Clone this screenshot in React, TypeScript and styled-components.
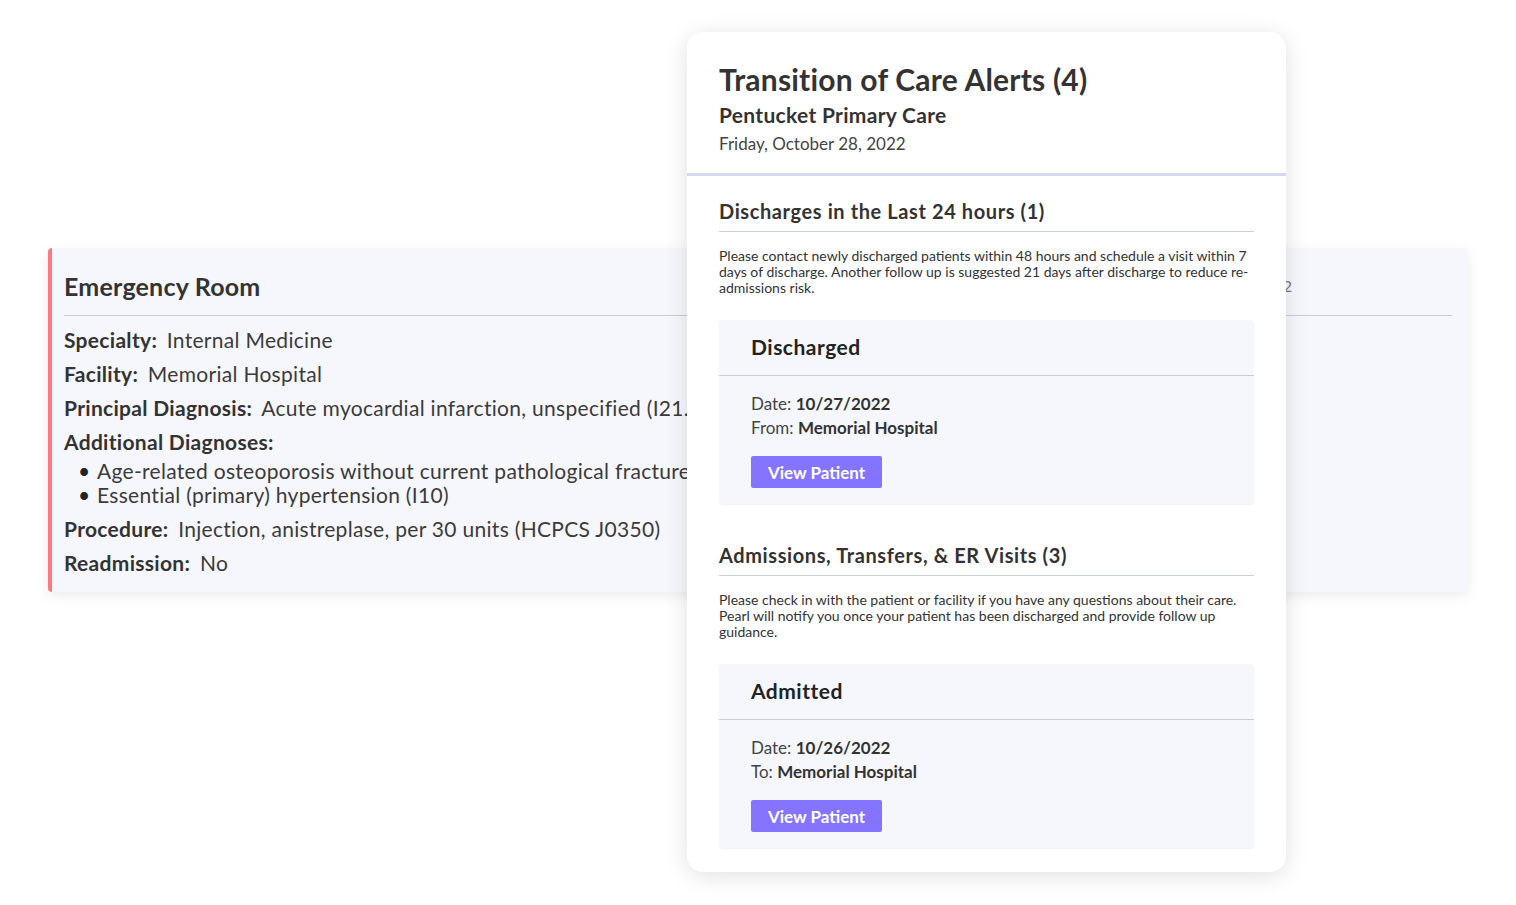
import React from "react";
import styled, { createGlobalStyle } from "styled-components";

const GlobalStyle = createGlobalStyle`
  html, body {
    margin: 0;
    padding: 0;
    background: #ffffff;
  }
  body {
    font-family: "Lato", "Noto Sans", sans-serif;
    color: #333333;
  }
`;

type Visit = {
  status: string;
  date: string;
  place: string;
  placeLabel: string;
};

const discharged: Visit[] = [
  { status: "Discharged", date: "10/27/2022", placeLabel: "From:", place: "Memorial Hospital" },
];

const admitted: Visit[] = [
  { status: "Admitted", date: "10/26/2022", placeLabel: "To:", place: "Memorial Hospital" },
];

function VisitCard({ visit }: { visit: Visit }) {
  return (
    <Card>
      <CardHead>{visit.status}</CardHead>
      <CardBody>
        <InfoLine>
          Date: <strong>{visit.date}</strong>
        </InfoLine>
        <InfoLine>
          {visit.placeLabel} <strong>{visit.place}</strong>
        </InfoLine>
        <ViewBtn>View Patient</ViewBtn>
      </CardBody>
    </Card>
  );
}

function App() {
  return (
    <Page>
      <GlobalStyle />
      <EventCard>
        <EventHeader>
          <EventTitle>Emergency Room</EventTitle>
          <EventDate>10/26/2022</EventDate>
        </EventHeader>
        <EventBody>
          <Field>
            <b>Specialty:</b> Internal Medicine
          </Field>
          <Field>
            <b>Facility:</b> Memorial Hospital
          </Field>
          <Field>
            <b>Principal Diagnosis:</b> Acute myocardial infarction, unspecified (I21.9)
          </Field>
          <Field>
            <b>Additional Diagnoses:</b>
          </Field>
          <DiagList>
            <li>Age-related osteoporosis without current pathological fracture (M81.0)</li>
            <li>Essential (primary) hypertension (I10)</li>
          </DiagList>
          <Field>
            <b>Procedure:</b> Injection, anistreplase, per 30 units (HCPCS J0350)
          </Field>
          <Field>
            <b>Readmission:</b> No
          </Field>
        </EventBody>
      </EventCard>

      <Modal>
        <ModalHeader>
          <ModalTitle>Transition of Care Alerts (4)</ModalTitle>
          <PracticeName>Pentucket Primary Care</PracticeName>
          <Today>Friday, October 28, 2022</Today>
        </ModalHeader>
        <ModalBody>
          <Section>
            <SectionTitle>Discharges in the Last 24 hours (1)</SectionTitle>
            <SectionNote>
              Please contact newly discharged patients within 48 hours and schedule a visit within 7
              days of discharge. Another follow up is suggested 21 days after discharge to reduce re-
              admissions risk.
            </SectionNote>
            {discharged.map((v) => (
              <VisitCard key={v.status} visit={v} />
            ))}
          </Section>
          <Section>
            <SectionTitle>Admissions, Transfers, &amp; ER Visits (3)</SectionTitle>
            <SectionNote>
              Please check in with the patient or facility if you have any questions about their care.
              Pearl will notify you once your patient has been discharged and provide follow up
              guidance.
            </SectionNote>
            {admitted.map((v) => (
              <VisitCard key={v.status} visit={v} />
            ))}
          </Section>
        </ModalBody>
      </Modal>
    </Page>
  );
}

const Page = styled.div`
  position: relative;
  width: 1516px;
  height: 905px;
  padding: 248px 48px 0;
  box-sizing: border-box;
  overflow: hidden;
`;

const EventCard = styled.div`
  width: 1420px;
  height: 344px;
  box-sizing: border-box;
  background: #f6f7fc;
  border-left: 4px solid #ff7a80;
  border-radius: 4px;
  padding: 0 16px 0 12px;
  box-shadow: 0 4px 14px rgba(0, 0, 0, 0.08);
  overflow: hidden;
`;

const EventHeader = styled.div`
  display: flex;
  justify-content: space-between;
  align-items: center;
  height: 67px;
  border-bottom: 1px solid #c9cbdb;
`;

const EventTitle = styled.h2`
  margin: 8px 0 0;
  font-size: 25px;
  letter-spacing: 0.2px;
  font-weight: 700;
  color: #333333;
`;

const EventDate = styled.span`
  margin: 8px 160px 0 0;
  font-size: 16px;
  color: #777777;
`;

const EventBody = styled.div`
  padding-top: 7px;
`;

const Field = styled.div`
  font-size: 21px;
  letter-spacing: 0.3px;
  line-height: 34px;
  color: #3b3b3b;
  white-space: nowrap;
  b {
    font-weight: 700;
    margin-right: 4px;
    color: #333333;
  }
`;

const DiagList = styled.ul`
  margin: 0 0 5px;
  padding-left: 14px;
  list-style: none;
  font-size: 21px;
  letter-spacing: 0.3px;
  line-height: 24px;
  color: #3b3b3b;
  white-space: nowrap;
  li::before {
    content: "•";
    display: inline-block;
    width: 19px;
    color: #222222;
  }
`;

const Modal = styled.div`
  position: absolute;
  left: 687px;
  top: 32px;
  width: 599px;
  height: 840px;
  background: #ffffff;
  border-radius: 16px;
  box-shadow: 0 4px 24px rgba(0, 0, 0, 0.12);
  overflow: hidden;
`;

const ModalHeader = styled.div`
  padding: 28px 32px 18px;
  border-bottom: 3px solid #d4d9ef;
`;

const ModalTitle = styled.h1`
  margin: 0;
  font-size: 30px;
  letter-spacing: 0.2px;
  line-height: 38px;
  font-weight: 700;
  color: #333333;
`;

const PracticeName = styled.div`
  margin-top: 4px;
  font-size: 21px;
  letter-spacing: 0.3px;
  line-height: 26px;
  font-weight: 700;
  color: #333333;
`;

const Today = styled.div`
  margin-top: 5px;
  font-size: 17px;
  line-height: 22px;
  color: #444444;
`;

const ModalBody = styled.div`
  padding: 23px 32px 0;
  display: flex;
  flex-direction: column;
  gap: 39px;
`;

const Section = styled.div``;

const SectionTitle = styled.h3`
  margin: 0;
  padding-bottom: 8px;
  font-size: 20px;
  letter-spacing: 0.6px;
  line-height: 24px;
  font-weight: 700;
  color: #333333;
  border-bottom: 1px solid #c9d0dc;
`;

const SectionNote = styled.p`
  margin: 16px 0 24px;
  font-size: 14px;
  letter-spacing: 0;
  line-height: 16px;
  color: #333333;
`;

const Card = styled.div`
  background: #f6f7fc;
  border-radius: 4px;
  box-shadow: 0 1px 2px rgba(0, 0, 0, 0.06);
`;

const CardHead = styled.div`
  padding: 13px 32px 14px;
  font-size: 21px;
  letter-spacing: 0.5px;
  line-height: 28px;
  font-weight: 700;
  color: #222222;
  border-bottom: 1px solid #c9cbdb;
`;

const CardBody = styled.div`
  padding: 16px 32px 16px;
`;

const InfoLine = styled.div`
  font-size: 17px;
  line-height: 24px;
  color: #444444;
  strong {
    font-weight: 700;
    color: #333333;
  }
`;

const ViewBtn = styled.button`
  display: block;
  margin-top: 16px;
  height: 32px;
  padding: 0 17px;
  border: none;
  border-radius: 2px;
  background: #8574ff;
  color: #ffffff;
  font-family: "Lato", sans-serif;
  font-size: 17px;
  font-weight: 700;
`;

export default App;
